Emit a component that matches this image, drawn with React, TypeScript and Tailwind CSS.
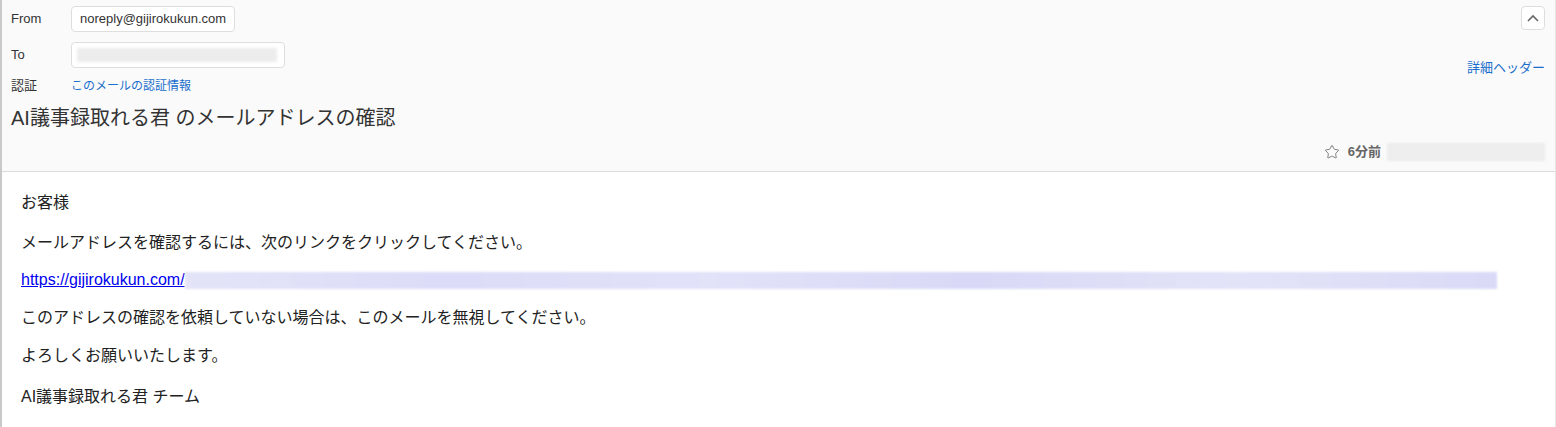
import React from "react";
import { Star } from "lucide-react";

const font = { fontFamily: '"Liberation Sans", Arial, "Noto Sans CJK JP", sans-serif' };

const Row = ({ label, children }: { label: string; children: React.ReactNode }) => (
  <div className="flex items-center">
    <div className="w-[60px] shrink-0 text-[13px] text-[#333]">{label}</div>
    {children}
  </div>
);

const App = () => {
  return (
    <div className="w-[1556px] h-[427px] bg-white overflow-hidden" style={font}>
      <div className="h-full border-l-2 border-l-[#c9c9c9] border-r border-r-[#e6e6e6]">
        <header className="bg-[#fafafa] border-b border-[#dcdcdc] h-[172px] pl-[9px] pr-[10px] pt-[6px]">
          <div className="flex justify-between">
            <div className="flex flex-col gap-[10px]">
              <Row label="From">
                <div className="h-[26px] px-[8px] flex items-center bg-white border border-[#dedede] rounded-[4px] text-[13px] text-[#333]">
                  noreply@gijirokukun.com
                </div>
              </Row>
              <Row label="To">
                <div className="h-[26px] w-[214px] px-[5px] flex items-center bg-white border border-[#dedede] rounded-[4px]">
                  <div className="h-[14px] w-[200px] bg-[#ececec] blur-[1.5px]" />
                </div>
              </Row>
            </div>
            <button className="w-[24px] h-[24px] flex items-center justify-center bg-white border border-[#dedede] rounded-[4px]">
              <svg width="12" height="8" viewBox="0 0 12 8" fill="none">
                <path d="M1 7 L6 2 L11 7" stroke="#666" strokeWidth="1.6" />
              </svg>
            </button>
          </div>
          <div className="flex justify-between items-start -mt-[2px]">
            <div className="mt-[10px]">
              <Row label="認証">
                <a className="text-[12px] text-[#1a6fcc]">このメールの認証情報</a>
              </Row>
            </div>
            <a className="block -mt-[8px] text-[13px] text-[#1a6fcc]">詳細ヘッダー</a>
          </div>
          <h1 className="mt-[8px] text-[20px] leading-[28px] text-[#333]">
            AI議事録取れる君 のメールアドレスの確認
          </h1>
          <div className="flex justify-end items-center mt-[10px] h-[20px]">
            <Star size={16} strokeWidth={1.4} className="text-[#777]" />
            <span className="ml-[8px] text-[13px] font-bold text-[#666]">6分前</span>
            <div className="ml-[6px] h-[18px] w-[158px] bg-[#ededed] blur-[1px]" />
          </div>
        </header>
        <main className="pl-[19px] pt-[20px] flex flex-col text-[16px] leading-[22px] text-[#222]">
          <p>お客様</p>
          <p className="mt-[18px]">メールアドレスを確認するには、次のリンクをクリックしてください。</p>
          <p className="mt-[15px] flex items-center">
            <a className="text-[#0000ee] underline">https://gijirokukun.com/</a>
            <span className="h-[17px] w-[1312px] bg-[linear-gradient(90deg,#e4e4f8,#dcdcf8_20%,#e2e2f9_40%,#d9d9f7_60%,#e3e3f8_80%,#dadaf7)] blur-[1px]" />
          </p>
          <p className="mt-[16px]">このアドレスの確認を依頼していない場合は、このメールを無視してください。</p>
          <p className="mt-[16px]">よろしくお願いいたします。</p>
          <p className="mt-[19px]">AI議事録取れる君 チーム</p>
        </main>
      </div>
    </div>
  );
};

export default App;
